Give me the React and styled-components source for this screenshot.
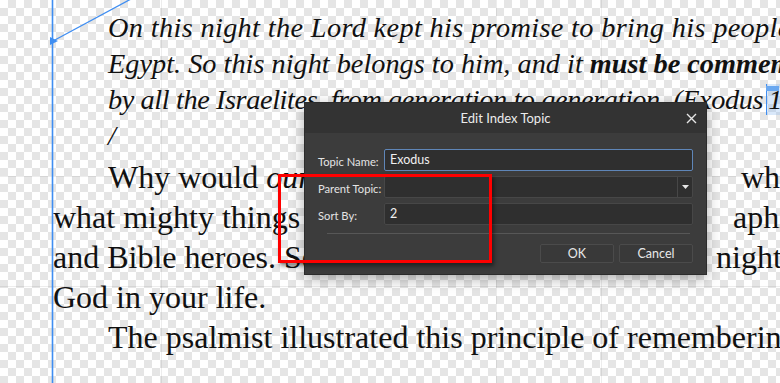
import styled, { createGlobalStyle } from "styled-components";

const GlobalStyle = createGlobalStyle`
    html, body {
        margin: 0;
        padding: 0;
        width: 780px;
        height: 383px;
        overflow: hidden;
    }
    body {
        background-color: #ffffff;
        background-image:
            linear-gradient(90deg, transparent 161px, rgba(0, 0, 0, 0.07) 161px, rgba(0, 0, 0, 0.07) 162px, transparent 162px),
            linear-gradient(90deg, transparent 496px, rgba(0, 0, 0, 0.07) 496px, rgba(0, 0, 0, 0.07) 497px, transparent 497px),
            linear-gradient(90deg, transparent 601px, rgba(0, 0, 0, 0.07) 601px, rgba(0, 0, 0, 0.07) 602px, transparent 602px),
            linear-gradient(180deg, transparent 176px, rgba(0, 0, 0, 0.07) 176px, rgba(0, 0, 0, 0.07) 177px, transparent 177px),
            linear-gradient(180deg, transparent 286px, rgba(0, 0, 0, 0.07) 286px, rgba(0, 0, 0, 0.07) 287px, transparent 287px),
            repeating-conic-gradient(#e5e5e5 0 25%, #ffffff 0 50%);
        background-size: auto, auto, auto, auto, auto, 16px 16px;
    }
`;

const Canvas = styled.div`
    position: relative;
    width: 780px;
    height: 383px;
    overflow: hidden;
`;

const TextFrame = styled.div`
    padding: 10px 0 0 53px;
    width: 1000px;
    font-family: "Liberation Serif", "Times New Roman", serif;
    color: #111;
`;

const Quote = styled.div`
    padding-left: 55px;
    font-style: italic;
    font-size: 28.3px;
    line-height: 36px;
`;

const QuoteLine = styled.div`
    white-space: nowrap;
    letter-spacing: ${(p) => p.$spacing || 0}px;
`;

const Body = styled.div`
    margin-top: 3px;
    font-size: 32px;
    line-height: 40px;
`;

const Line = styled.div`
    display: grid;
    grid-template-columns: ${(p) => (p.$split ? `${p.$split}px auto` : "auto")};
    padding-left: ${(p) => (p.$indent ? "55px" : "0")};
    white-space: nowrap;
`;

const Head = styled.span`
    overflow: hidden;
`;

const Caret = styled.span`
    position: relative;
    margin-left: 3px;
    padding-left: 1px;
    background: rgba(130, 180, 240, 0.3);
    border-left: 1.5px solid #3f8ef2;

    &::before {
        content: "";
        position: absolute;
        left: -1px;
        top: 2px;
        width: 13px;
        height: 5px;
        background: #6aa8f0;
    }
`;

const Overlay = styled.svg`
    position: absolute;
    left: 0;
    top: 0;
    pointer-events: none;
`;

const Dialog = styled.div`
    position: absolute;
    left: 305px;
    top: 103px;
    width: 401px;
    height: 171px;
    background: #3c3c3c;
    box-shadow: 0 0 0 1px #2c2c2c, 0 4px 14px rgba(0, 0, 0, 0.35);
    font-family: Lato, "Noto Sans", sans-serif;
    font-size: 11.2px;
    color: #e4e4e4;
    display: flex;
    flex-direction: column;
`;

const TitleBar = styled.div`
    height: 30px;
    background: #333333;
    display: flex;
    align-items: center;
    justify-content: center;
    position: relative;
    font-size: 13px;
    color: #ececec;
`;

const CloseButton = styled.button`
    position: absolute;
    right: 9px;
    top: 9px;
    width: 12px;
    height: 12px;
    padding: 0;
    border: 0;
    background: none;
    display: flex;
    align-items: center;
    justify-content: center;
`;

const Form = styled.div`
    padding: 16px 13px 11px 13px;
    display: flex;
    flex-direction: column;
    gap: 5px;
`;

const Row = styled.div`
    display: grid;
    grid-template-columns: 66px 1fr;
    align-items: center;
    height: 22px;
`;

const Label = styled.span`
    white-space: nowrap;
    padding-top: 3px;
`;

const Field = styled.div`
    height: 22px;
    box-sizing: border-box;
    background: #2f2f2f;
    border: 1px solid ${(p) => (p.$focused ? "#5f86b8" : "#474747")};
    border-radius: 2px;
    display: flex;
    align-items: center;
    padding: 0 0 2px 5px;
    color: #f0f0f0;
    font-size: 12.5px;
`;

const Select = styled(Field)`
    padding: 0;
    justify-content: flex-end;
`;

const SelectArrow = styled.span`
    width: 14px;
    height: 100%;
    border-left: 1px solid #474747;
    display: flex;
    align-items: center;
    justify-content: center;
`;

const Divider = styled.div`
    height: 1px;
    background: #575757;
    margin: 3px 3px 0 9px;
`;

const Buttons = styled.div`
    display: flex;
    justify-content: flex-end;
    gap: 5px;
    margin-top: 5px;
`;

const Button = styled.button`
    width: 74px;
    height: 19px;
    padding: 0;
    background: #393939;
    border: 1px solid #4b4b4b;
    border-radius: 2px;
    color: #e8e8e8;
    font-family: inherit;
    font-size: 12.5px;
`;

const Annotation = styled.div`
    position: absolute;
    left: 278px;
    top: 174px;
    width: 214px;
    height: 89px;
    box-sizing: border-box;
    border: 3px solid #ff0000;
    box-shadow: 2px 3px 4px rgba(0, 0, 0, 0.45);
`;

export default function App() {
    return (
        <>
            <GlobalStyle />
            <Canvas>
                <TextFrame>
                    <Quote>
                        <QuoteLine $spacing={0.35}>
                            On this night the Lord kept his promise to bring his people out of
                        </QuoteLine>
                        <QuoteLine>
                            Egypt. So this night belongs to him, and it <b>must be commemorated</b>
                        </QuoteLine>
                        <QuoteLine $spacing={-0.4}>
                            by all the Israelites, from generation to generation. (Exodus<Caret>12:42</Caret>)
                        </QuoteLine>
                        <QuoteLine>/</QuoteLine>
                    </Quote>
                    <Body>
                        <Line $indent $split={633}>
                            <Head>
                                Why would <i>our</i> Lord want us to recall
                            </Head>
                            <span>wherever we gather,</span>
                        </Line>
                        <Line $split={680}>
                            <Head>what mighty things he has done? We read bio</Head>
                            <span>aphies of the saints</span>
                        </Line>
                        <Line $split={663}>
                            <Head>and Bible heroes. See what God did that</Head>
                            <span>night. Remember</span>
                        </Line>
                        <Line>God in your life.</Line>
                        <Line $indent>The psalmist illustrated this principle of remembering</Line>
                    </Body>
                </TextFrame>

                <Overlay width="780" height="383" viewBox="0 0 780 383">
                    <line x1="52.5" y1="0" x2="52.5" y2="383" stroke="#3f8ef2" strokeWidth="1.6" />
                    <line x1="53" y1="41" x2="131" y2="-1" stroke="#3f8ef2" strokeWidth="1.3" />
                    <polygon points="50,37 58,41 50,45" fill="#3f8ef2" />
                </Overlay>

                <Dialog>
                    <TitleBar>
                        Edit Index Topic
                        <CloseButton aria-label="Close">
                            <svg width="11" height="11" viewBox="0 0 11 11">
                                <path d="M1 1 L10 10 M10 1 L1 10" stroke="#e6e6e6" strokeWidth="1.4" />
                            </svg>
                        </CloseButton>
                    </TitleBar>
                    <Form>
                        <Row>
                            <Label>Topic Name:</Label>
                            <Field $focused>Exodus</Field>
                        </Row>
                        <Row>
                            <Label>Parent Topic:</Label>
                            <Select>
                                <SelectArrow>
                                    <svg width="7" height="4" viewBox="0 0 7 4">
                                        <path d="M0 0 H7 L3.5 4 Z" fill="#e6e6e6" />
                                    </svg>
                                </SelectArrow>
                            </Select>
                        </Row>
                        <Row>
                            <Label>Sort By:</Label>
                            <Field>2</Field>
                        </Row>
                        <Divider />
                        <Buttons>
                            <Button>OK</Button>
                            <Button>Cancel</Button>
                        </Buttons>
                    </Form>
                </Dialog>

                <Annotation />
            </Canvas>
        </>
    );
}
